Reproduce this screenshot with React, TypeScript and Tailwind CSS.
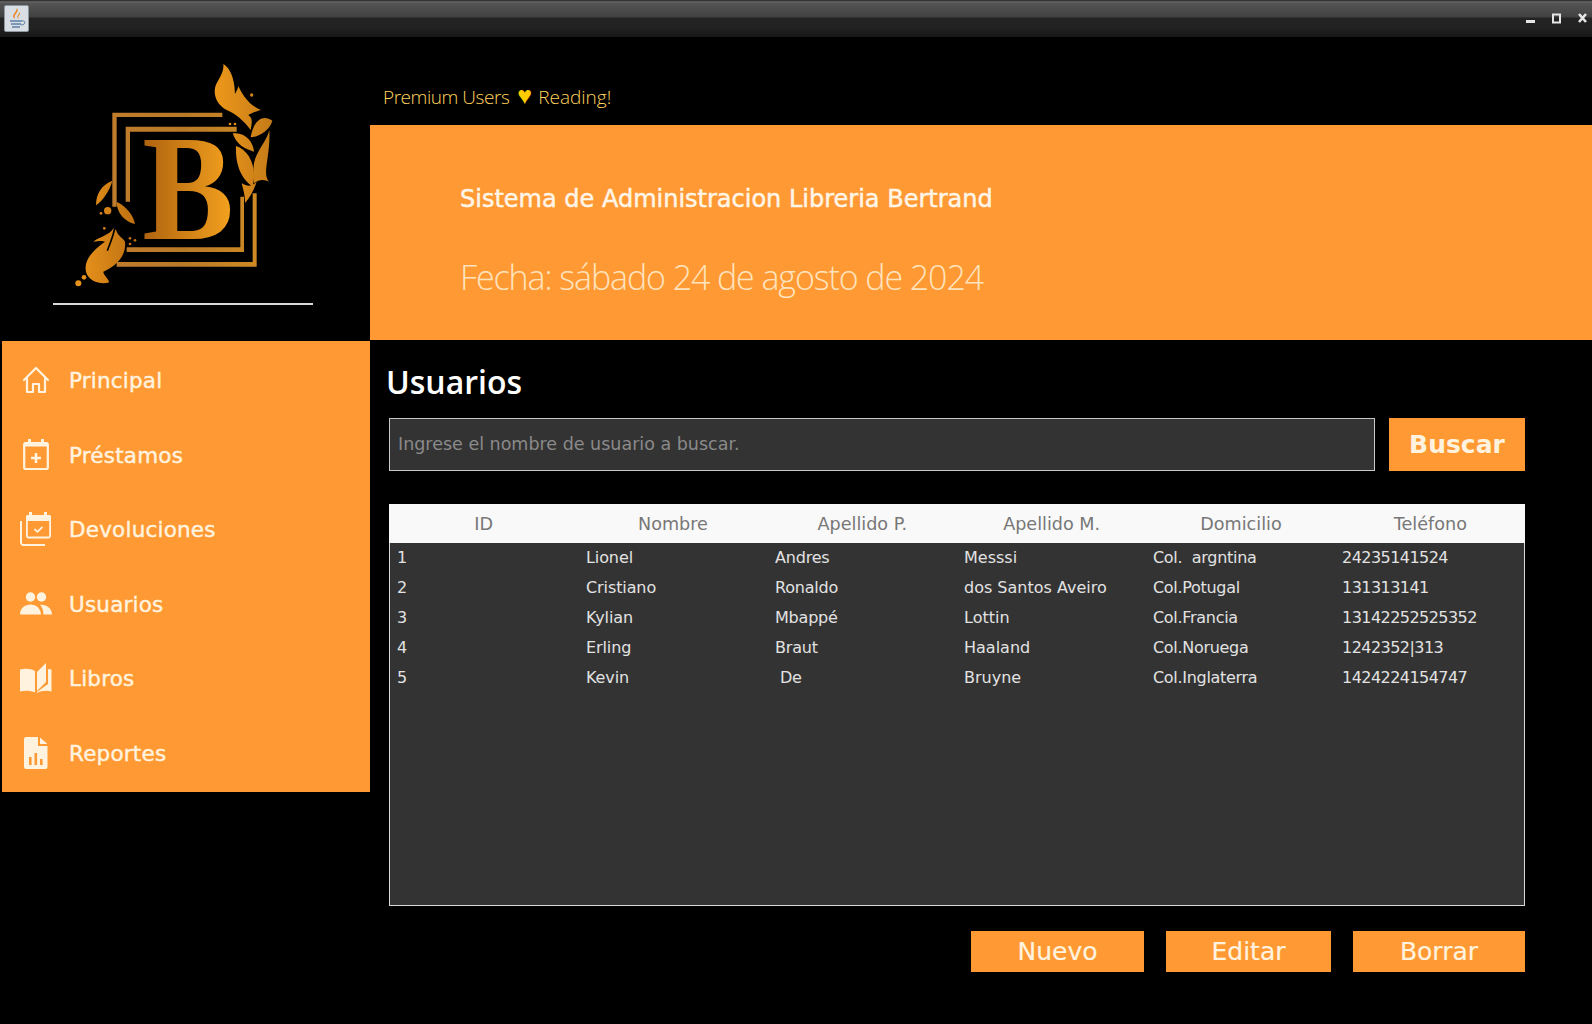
import React from "react";

const dv = "font-['DejaVu_Sans',sans-serif]";

const rows = [
  ["1", "Lionel", "Andres", "Messsi", "Col.  argntina", "24235141524"],
  ["2", "Cristiano", "Ronaldo", "dos Santos Aveiro", "Col.Potugal", "131313141"],
  ["3", "Kylian", "Mbappé", "Lottin", "Col.Francia", "13142252525352"],
  ["4", "Erling", "Braut", "Haaland", "Col.Noruega", "1242352|313"],
  ["5", "Kevin", "\u00a0De", "Bruyne", "Col.Inglaterra", "1424224154747"],
];
const heads = ["ID", "Nombre", "Apellido P.", "Apellido M.", "Domicilio", "Teléfono"];
const colTrack = [
  "tracking-[-0.1px]",
  "tracking-[-0.1px]",
  "tracking-[-0.2px]",
  "tracking-[0px]",
  "tracking-[-0.3px]",
  "tracking-[-0.55px]",
];

function Logo() {
  return (
    <svg width="230" height="250" viewBox="0 0 690 750">
      <defs>
        <linearGradient id="g" gradientUnits="userSpaceOnUse" x1="60" y1="0" x2="640" y2="0">
          <stop offset="0" stopColor="#e8931c" />
          <stop offset="0.35" stopColor="#b5690f" />
          <stop offset="0.7" stopColor="#ec981a" />
          <stop offset="1" stopColor="#c47a18" />
        </linearGradient>
        <linearGradient id="b" gradientUnits="userSpaceOnUse" x1="255" y1="0" x2="510" y2="0">
          <stop offset="0" stopColor="#b0640f" />
          <stop offset="1" stopColor="#f2a01e" />
        </linearGradient>
        <linearGradient id="f" gradientUnits="userSpaceOnUse" x1="157" y1="0" x2="590" y2="0">
          <stop offset="0" stopColor="#c07c2c" />
          <stop offset="0.5" stopColor="#b97a28" />
          <stop offset="1" stopColor="#cf8a24" />
        </linearGradient>
      </defs>
      <g fill="url(#f)">
        <path d="M157 188H487V201H170V470H157Z" />
        <path d="M197 230H530V245H210V455H197Z" />
        <path d="M200 592H541V440H552V606H200Z" />
        <path d="M578 430H590V650H170V636H578Z" />
      </g>
      <text
        x="247"
        y="566"
        fontFamily="'Liberation Serif',serif"
        fontWeight="700"
        fontSize="450"
        textLength="275"
        lengthAdjust="spacingAndGlyphs"
        fill="url(#b)"
      >
        B
      </text>
      <g fill="url(#g)">
        <path d="M490 42C520 60 525 110 525 132C530 122 535 114 535 108C545 130 565 165 603 180C585 185 575 190 565 195C580 205 575 220 572 240C555 215 525 190 500 180C470 165 455 130 470 100C480 80 492 65 490 42Z" />
        <path d="M637 212C605 190 580 215 572 262C590 262 628 245 637 212Z" />
        <path d="M628 240C620 275 590 300 582 340C578 365 580 385 582 400C600 385 615 390 627 395C605 370 632 320 628 240Z" />
        <path d="M518 250C555 245 580 275 582 305C555 298 530 285 518 250Z" />
        <path d="M528 288C565 300 592 345 578 410C555 395 525 360 528 288Z" />
        <path d="M545 400C565 412 578 408 590 395C582 420 568 445 555 458C555 435 550 420 545 400Z" />
        <path d="M157 392C150 420 130 450 108 466C108 430 125 405 157 392Z" />
        <path d="M170 455C200 470 220 495 225 522C195 515 170 490 170 455Z" />
        <path d="M160 535C150 555 120 560 100 575C118 572 128 572 135 575C100 600 70 630 78 665C85 695 125 705 148 697C145 685 130 675 130 665C165 650 200 620 195 575C190 565 175 560 168 540Z" />
        <circle cx="143" cy="482" r="11" />
        <circle cx="55" cy="700" r="9" />
        <circle cx="72" cy="682" r="7" />
        <circle cx="210" cy="565" r="4" />
        <circle cx="225" cy="571" r="4" />
        <circle cx="210" cy="582" r="4" />
        <circle cx="123" cy="490" r="4" />
        <circle cx="133" cy="535" r="4" />
        <circle cx="575" cy="135" r="5" />
        <circle cx="510" cy="222" r="4" />
        <circle cx="525" cy="222" r="4" />
      </g>
      <path d="M165 530C160 560 150 580 142 602" stroke="#000" strokeWidth="5" fill="none" />
    </svg>
  );
}

const cream = "#fff3df";

function HomeIcon() {
  return (
    <svg width="28" height="28" viewBox="0 0 28 28" fill="none" stroke={cream} strokeWidth="2.2" strokeLinejoin="round" strokeLinecap="round">
      <path d="M2 14L14 2L26 14" />
      <path d="M5 12V26H11V18H17V26H23V12" />
    </svg>
  );
}
function CalPlus() {
  return (
    <svg width="26" height="31" viewBox="0 0 26 31" fill="none">
      <path d="M5 0h3v4H5zM18 0h3v4h-3z" fill={cream} />
      <path d="M2.5 3h21a1.5 1.5 0 0 1 1.5 1.5v3H1v-3A1.5 1.5 0 0 1 2.5 3Z" fill={cream} />
      <rect x="1.2" y="4" width="23.6" height="26" rx="1.5" stroke={cream} strokeWidth="2.2" />
      <path d="M13 14v10M8 19h10" stroke={cream} strokeWidth="2.6" />
    </svg>
  );
}
function CalStack() {
  return (
    <svg width="32" height="34" viewBox="0 0 32 34" fill="none">
      <path d="M9 0h3v4H9zM24 0h3v4h-3z" fill={cream} />
      <path d="M7.5 3h22A1.5 1.5 0 0 1 31 4.500V9H6V4.500A1.500 1.500 0 0 1 7.500 3Z" fill={cream} />
      <rect x="6.900" y="4" width="23.200" height="21.500" rx="1.500" stroke={cream} strokeWidth="1.800" />
      <path d="M1 9V30.500A2.500 2.500 0 0 0 3.500 33H25" stroke={cream} strokeWidth="2" />
      <path d="M14.500 17l3 2.800 5-5" stroke={cream} strokeWidth="1.800" />
    </svg>
  );
}
function People() {
  return (
    <svg width="32" height="23" viewBox="0 0 32 23" fill={cream}>
      <circle cx="10.500" cy="5" r="4.700" />
      <circle cx="21.500" cy="5" r="4.700" />
      <path d="M0 22.500C0 16 5 12.500 10.500 12.500S20.500 16 21 22.500Z" />
      <path d="M20 12.800C26 12 32 16 32 22.500H23.500C23.300 18.500 22.300 15.500 20 12.800Z" />
    </svg>
  );
}
function Book() {
  return (
    <svg width="32" height="31" viewBox="0 0 32 31" fill={cream}>
      <path d="M0 6.500C5 5 11 5.500 15 8V29.500C11 27.500 5 27 0 28.500Z" />
      <path d="M17 9L26 0V19L17 28Z" />
      <path d="M28 6L31.500 6.500V28.500C27 27 21 27.500 17 30V29L28 21Z" />
    </svg>
  );
}
function Report() {
  return (
    <svg width="24" height="32" viewBox="0 0 24 32">
      <path d="M2 0H14V9H23.500V30A2 2 0 0 1 21.500 32H2A2 2 0 0 1 0 30V2A2 2 0 0 1 2 0Z" fill={cream} />
      <path d="M16 0.500L23.500 7H16Z" fill={cream} />
      <path d="M5 20h2.600v8H5zM10.500 16h2.600v12h-2.600zM16 22h2.600v6H16z" fill="#ff9933" />
    </svg>
  );
}

const nav: [string, React.ReactNode][] = [
  ["Principal", <HomeIcon />],
  ["Préstamos", <CalPlus />],
  ["Devoluciones", <CalStack />],
  ["Usuarios", <People />],
  ["Libros", <Book />],
  ["Reportes", <Report />],
];

function TitleBar() {
  return (
    <div className="h-[37px] flex items-center justify-between pl-[4px] pr-[5px] bg-[linear-gradient(180deg,#222_0px,#6a6a6a_2px,#555_3px,#414141_17px,#232323_18px,#222_28px,#161616_37px)]">
      <svg width="25" height="27" viewBox="0 0 25 27">
        <rect x="0.500" y="0.500" width="24" height="26" rx="1.500" fill="#d8dee4" stroke="#8e98a0" />
        <path d="M13 3C16 7 9 9 11 14C6 11 12 8 13 3Z" fill="#e8872a" />
        <path d="M16 7C17 10 13 11 14.500 14C11.500 12 14.500 10 16 7Z" fill="#e8872a" />
        <path d="M6 16H18M7 19H17M8 22H16" stroke="#5d7fa5" strokeWidth="1.600" />
        <path d="M18 16C22 15 22 20 17 20" stroke="#5d7fa5" fill="none" />
      </svg>
      <div className="flex items-start gap-[17px] h-[18px]">
        <svg width="9" height="18" viewBox="0 0 9 18"><rect y="10" width="9" height="3" fill="#e6e6e6" /></svg>
        <svg width="9" height="18" viewBox="0 0 9 18" fill="none"><rect x="1" y="4.500" width="7" height="8" stroke="#e6e6e6" strokeWidth="2" /></svg>
        <svg width="9" height="18" viewBox="0 0 9 18" fill="none"><path d="M1 4L8 12M8 4L1 12" stroke="#e6e6e6" strokeWidth="2.600" /></svg>
      </div>
    </div>
  );
}

function Sidebar() {
  return (
    <div className="w-[370px] shrink-0 flex flex-col">
      <div className="h-[304px] pl-[60px] pt-[13px] relative">
        <Logo />
        <div className="absolute left-[53px] top-[266px] w-[260px] h-[2px] bg-[#d8d8d8]" />
      </div>
      <div className="ml-[2px] h-[451px] py-[2px] bg-[#ff9933] flex flex-col">
        {nav.map(([label, icon]) => (
          <div key={label} className="flex-1 flex items-center pl-[18px]">
            <div className="w-[32px] flex justify-center">{icon}</div>
            <span className={`ml-[17px] pt-[2px] text-[21.5px] text-[#fff3df] tracking-[0.2px] [-webkit-text-stroke:0.45px_#fff3df] ${dv}`}>{label}</span>
          </div>
        ))}
      </div>
    </div>
  );
}

function Main() {
  return (
    <div className="flex-1 flex flex-col">
      <div className="h-[88px] flex items-end pl-[13px] pb-[14px]">
        <span className="text-[19px] leading-[28px] font-light text-[#ffd35c] font-['Open_Sans',sans-serif] whitespace-pre">
          <span className="tracking-[-0.45px]">Premium Users</span>
          <span className="ml-[8px] mr-[6px] text-[25px] leading-none text-[#ffcc00]">♥</span>
          Reading!
        </span>
      </div>
      <div className="h-[215px] bg-[#ff9933] pl-[90px] pt-[57px]">
        <div className={`text-[24px] leading-[34px] text-[#fff5e6] [-webkit-text-stroke:0.5px_#fff5e6] ${dv}`}>
          Sistema de Administracion Libreria Bertrand
        </div>
        <div className="mt-[38px] text-[34px] leading-[46px] tracking-[-1.1px] font-light text-[#ffe3bd] font-['Open_Sans',sans-serif]">
          Fecha: sábado 24 de agosto de 2024
        </div>
      </div>
      <div className="pl-[19px] pr-[67px] flex flex-col">
        <div className="h-[78px] pt-[6px] flex items-center -ml-[3px] text-[32px] font-semibold text-white font-['Open_Sans',sans-serif]">
          Usuarios
        </div>
        <div className="h-[53px] flex gap-[14px]">
          <div className={`flex-1 border border-[#c8c8c8] bg-[#333333] flex items-center pl-[8px] pb-[1px] text-[17.5px] text-[#8a8a8a] ${dv}`}>
            Ingrese el nombre de usuario a buscar.
          </div>
          <div className={`w-[136px] bg-[#ff9933] flex items-center justify-center text-[25px] font-bold text-[#fff3df] ${dv}`}>
            Buscar
          </div>
        </div>
        <div className={`mt-[33px] h-[402px] border-x border-b border-[#d8d8d8] bg-[#333333] ${dv}`}>
          <div className="h-[39px] pt-px bg-[#f9f9f9] -mx-px grid grid-cols-6 items-center text-center text-[17.6px] text-[#777]">
            {heads.map((h) => (
              <div key={h}>{h}</div>
            ))}
          </div>
          {rows.map((r) => (
            <div key={r[0]} className="h-[30px] grid grid-cols-6 items-center text-[16px] text-[#e2e2e2]">
              {r.map((c, i) => (
                <div key={i} className={`pl-[7px] whitespace-pre ${colTrack[i]}`}>{c}</div>
              ))}
            </div>
          ))}
        </div>
        <div className={`mt-[25px] h-[41px] flex justify-end gap-[22px] text-[25px] text-[#fff3df] [-webkit-text-stroke:0.2px_#fff3df] ${dv}`}>
          <div className="w-[173px] bg-[#ff9933] flex items-center justify-center">Nuevo</div>
          <div className="w-[165px] bg-[#ff9933] flex items-center justify-center">Editar</div>
          <div className="w-[172px] bg-[#ff9933] flex items-center justify-center">Borrar</div>
        </div>
      </div>
    </div>
  );
}

export default function App() {
  return (
    <div className="w-[1592px] h-[1024px] bg-black overflow-hidden flex flex-col">
      <TitleBar />
      <div className="flex-1 flex">
        <Sidebar />
        <Main />
      </div>
    </div>
  );
}
